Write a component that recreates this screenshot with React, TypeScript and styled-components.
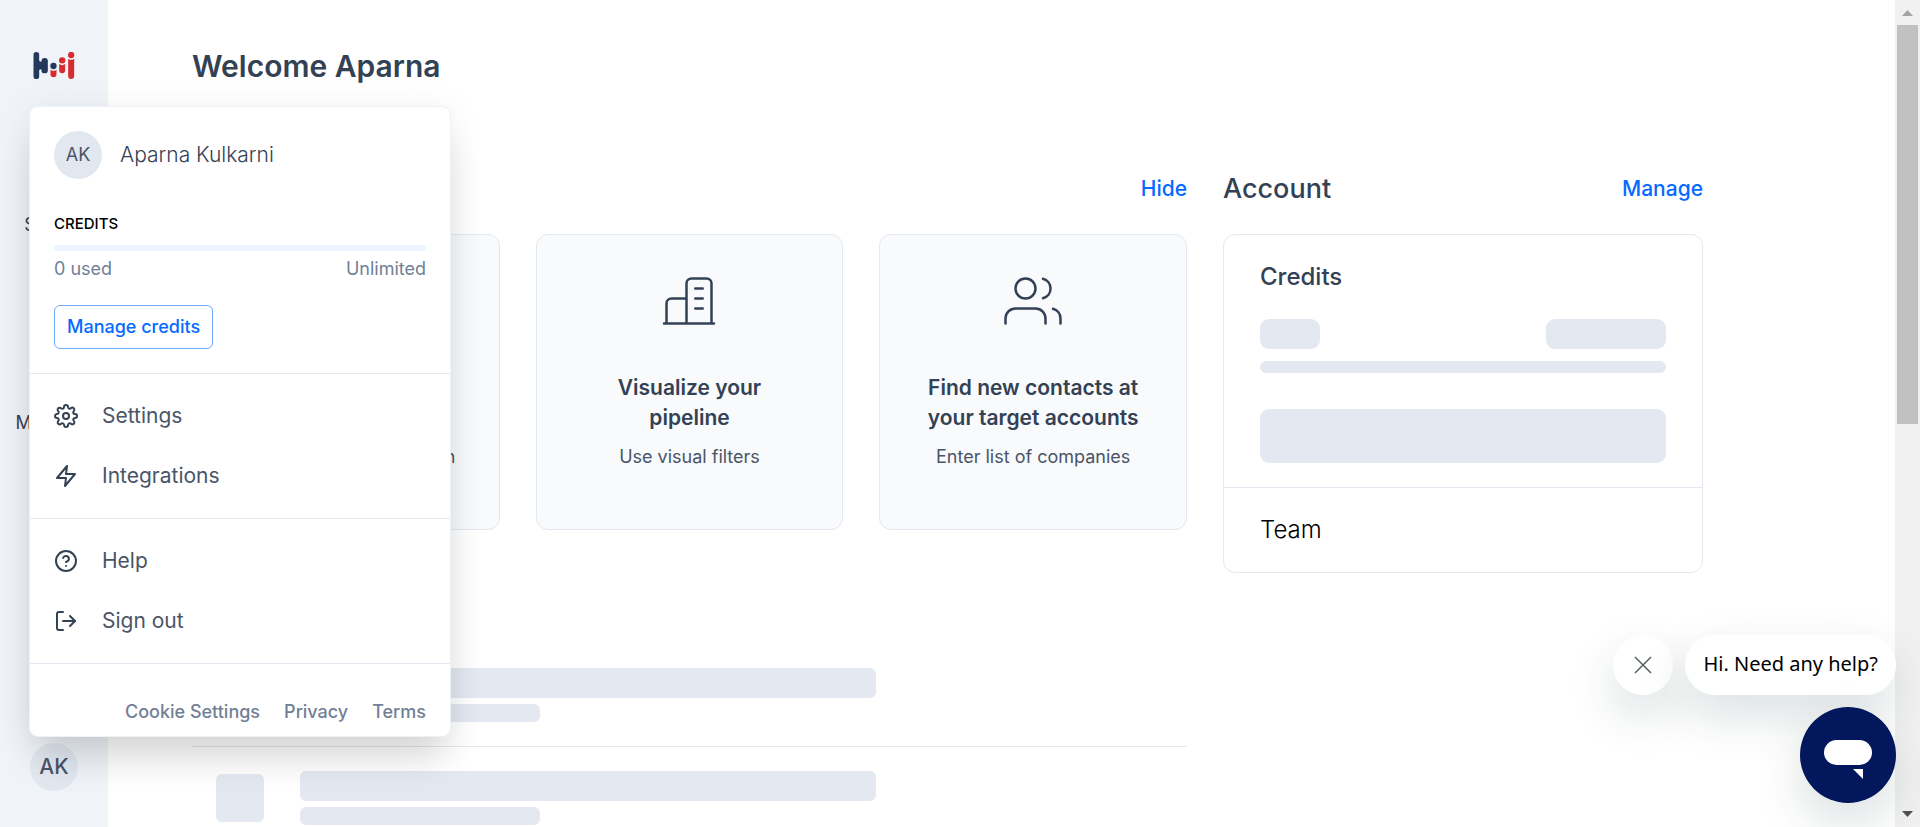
import React from "react";
import styled, { createGlobalStyle } from "styled-components";
import { FiHelpCircle, FiList, FiLogOut, FiSearch, FiSettings, FiUser, FiUsers, FiZap } from "react-icons/fi";

const ink = "#334155";
const muted = "#718096";
const line = "#e2e8f0";
const blue = "#066aff";
const bone = "#e3e8f1";

const GlobalStyle = createGlobalStyle`
  *, *::before, *::after { box-sizing: border-box; }
  body {
    margin: 0;
    background: #fff;
    color: ${ink};
    font-family: Inter, "Liberation Sans", sans-serif;
    font-size: 18px;
    line-height: 27px;
  }
  h1, h2, h3, p, ul { margin: 0; padding: 0; }
  a { color: inherit; text-decoration: none; }
  button { font: inherit; cursor: pointer; }
`;

const Shell = styled.div`
  position: relative;
  display: flex;
  height: 100vh;
  overflow: hidden;
`;

const Sidebar = styled.aside`
  flex: none;
  width: 108px;
  display: flex;
  flex-direction: column;
  align-items: center;
  padding: 52px 0 36px;
  background: #f0f4f9;
`;

const SideNav = styled.nav`
  flex: 1;
  display: flex;
  flex-direction: column;
  padding-top: 66px;
`;

const SideLink = styled.a`
  display: flex;
  flex-direction: column;
  align-items: center;
  gap: 12px;
  height: 99px;
  padding-top: 24px;
`;

const Avatar = styled.span<{ $large?: boolean }>`
  display: flex;
  align-items: center;
  justify-content: center;
  width: 48px;
  height: 48px;
  border-radius: 50%;
  background: #e2e8f0;
  color: #4a5568;
  font-size: ${(p) => (p.$large ? 21 : 18)}px;
  line-height: 26px;
  font-weight: ${(p) => (p.$large ? 500 : 400)};
`;

const AvatarButton = styled.button`
  padding: 0;
  border: 0;
  background: none;
`;

const Main = styled.main`
  flex: 1;
  min-width: 0;
  overflow: hidden;
  padding: 48px 84px 0;
`;

const PageTitle = styled.h1`
  font-size: 30px;
  line-height: 36px;
  font-weight: 600;
  margin-bottom: 86px;
`;

const Columns = styled.div`
  display: grid;
  grid-template-columns: minmax(0, 1fr) 480px;
  gap: 36px;
  max-width: 1511px;
`;

const SectionHead = styled.div`
  display: flex;
  align-items: center;
  justify-content: space-between;
  height: 38px;
  margin-bottom: 26px;
`;

const SectionTitle = styled.h2`
  font-size: 27px;
  line-height: 36px;
  font-weight: 500;
`;

const HideButton = styled.button`
  margin-left: auto;
  padding: 0;
  border: 0;
  background: none;
  color: ${blue};
  font-size: 21px;
  line-height: 36px;
  font-weight: 500;
`;

const ManageLink = styled.a`
  color: ${blue};
  font-size: 21px;
  line-height: 36px;
  font-weight: 500;
`;

const Cards = styled.div`
  display: grid;
  grid-template-columns: repeat(3, minmax(0, 1fr));
  gap: 36px;
`;

const Card = styled.a`
  display: flex;
  flex-direction: column;
  align-items: center;
  min-height: 296px;
  padding: 36px 42px 24px;
  border: 1px solid ${line};
  border-radius: 12px;
  background: #f9fafc;
  text-align: center;
`;

const CardTitle = styled.h3`
  margin: 42px 0 10px;
  font-size: 21px;
  line-height: 30px;
  font-weight: 600;
`;

const CardText = styled.p`
  color: #4a5568;
  white-space: nowrap;
`;

const Activity = styled.ul`
  margin-top: 114px;
  list-style: none;
`;

const ActivityRow = styled.li`
  display: flex;
  align-items: center;
  gap: 36px;
  padding: 24px;
  border-bottom: 1px solid ${line};
`;

const ActivityText = styled.div`
  flex: 1;
  display: flex;
  flex-direction: column;
  gap: 6px;
`;

const Bone = styled.span<{ $w: string; $h: number; $r: number }>`
  display: block;
  flex: none;
  width: ${(p) => p.$w};
  height: ${(p) => p.$h}px;
  border-radius: ${(p) => p.$r}px;
  background: ${bone};
`;

const Panel = styled.div`
  border: 1px solid ${line};
  border-radius: 12px;
`;

const PanelSection = styled.section`
  display: flex;
  flex-direction: column;
  padding: 24px 36px;
  & + & { border-top: 1px solid ${line}; }
`;

const PanelTitle = styled.h3<{ $plain?: boolean }>`
  font-size: 24px;
  line-height: 36px;
  font-weight: ${(p) => (p.$plain ? 300 : 500)};
  color: ${(p) => (p.$plain ? "#000" : ink)};
`;

const BoneRow = styled.div`
  display: flex;
  justify-content: space-between;
  margin: 24px 0 12px;
`;

const BoneBlock = styled.div`
  margin-top: 36px;
`;

const ScrollTrack = styled.div`
  flex: none;
  width: 25px;
  display: flex;
  flex-direction: column;
  align-items: center;
  background: #f1f1f1;
`;

const ScrollArrow = styled.svg`
  flex: none;
  width: 25px;
  height: 25px;
`;

const ScrollThumb = styled.div`
  flex: 399;
  width: 21px;
  background: #c1c1c1;
`;

const ScrollGap = styled.div`
  flex: 378;
`;

const Menu = styled.div`
  position: absolute;
  left: 29px;
  bottom: 90px;
  width: 422px;
  border: 1px solid #edf2f7;
  border-radius: 9px;
  background: #fff;
  box-shadow: 0 30px 38px -8px rgba(0, 0, 0, 0.12), 0 6px 36px rgba(0, 0, 0, 0.08);
`;

const MenuSection = styled.div`
  display: flex;
  flex-direction: column;
  padding: 24px;
`;

const Profile = styled.div`
  display: flex;
  align-items: center;
  gap: 18px;
  font-size: 21px;
  line-height: 26px;
  font-weight: 300;
`;

const CreditsLabel = styled.h2`
  margin: 33px 0 9px;
  color: #000;
  font-size: 15px;
  line-height: 24px;
  font-weight: 500;
`;

const Meter = styled.div`
  height: 6px;
  border-radius: 3px;
  background: #edf4ff;
`;

const Usage = styled.div`
  display: flex;
  justify-content: space-between;
  margin: 4px 0 23px;
  color: ${muted};
`;

const OutlineButton = styled.button`
  align-self: flex-start;
  height: 44px;
  padding: 0 12px;
  border: 1px solid #6ea8fe;
  border-radius: 6px;
  background: #fff;
  color: ${blue};
  line-height: 26px;
  font-weight: 500;
`;

const MenuGroup = styled.nav`
  padding: 12px 0;
  border-top: 1px solid ${line};
`;

const MenuItem = styled.a`
  display: flex;
  align-items: center;
  gap: 24px;
  height: 60px;
  padding: 0 24px;
  color: #4a5568;
  font-size: 21px;
  line-height: 26px;
  svg { color: ${ink}; }
`;

const MenuFooter = styled.footer`
  display: flex;
  justify-content: flex-end;
  gap: 24px;
  padding: 36px 24px 12px;
  border-top: 1px solid ${line};
  color: ${muted};
  line-height: 24px;
  font-weight: 500;
`;

const Chat = styled.div`
  position: absolute;
  right: 24px;
  bottom: 24px;
  display: flex;
  flex-direction: column;
  align-items: flex-end;
  gap: 12px;
`;

const ChatPrompt = styled.div`
  display: flex;
  gap: 12px;
`;

const chatShadow = "0 20px 48px rgba(0, 50, 45, 0.15)";

const ChatClose = styled.button`
  display: flex;
  align-items: center;
  justify-content: center;
  width: 60px;
  height: 60px;
  padding: 0;
  border: 0;
  border-radius: 50%;
  background: #fff;
  box-shadow: ${chatShadow};
`;

const ChatBubble = styled.button`
  height: 60px;
  padding: 0 18px 3px;
  border: 0;
  border-radius: 30px;
  background: #fff;
  box-shadow: ${chatShadow};
  color: #000;
  font-family: "Noto Sans", "Open Sans", sans-serif;
  font-size: 20px;
`;

const ChatButton = styled.button`
  width: 96px;
  height: 96px;
  padding: 0;
  border: 0;
  border-radius: 50%;
  background: #02175c;
  box-shadow: ${chatShadow};
`;

const Logo = () => (
  <svg width="42" height="27" viewBox="40 36 123 81" role="img" aria-label="Home">
    <g fill="#24385b">
      <rect x="40" y="36" width="17" height="81" rx="8.5" />
      <rect x="64" y="54" width="19" height="46" rx="9.5" />
      <path d="M55 60Q60 68 66 64V90Q60 84 55 93Z" />
      <circle cx="100" cy="78" r="9.5" />
    </g>
    <g fill="#d62b2f">
      <path d="M91 89Q100 96 109 89V103A9 9 0 0 1 91 103Z" />
      <circle cx="126" cy="61" r="9.5" />
      <path d="M117 72Q126 79 135 72V91A9 9 0 0 1 117 91Z" />
      <circle cx="153" cy="45" r="9.5" />
      <path d="M144 56Q153 63 162 56V108A9 9 0 0 1 144 108Z" />
    </g>
  </svg>
);

const BuildingIcon = () => (
  <svg width="60" height="60" viewBox="0 0 24 24" fill="none" stroke="currentColor" strokeWidth="1" strokeLinecap="round" strokeLinejoin="round" aria-hidden="true">
    <path d="M2 21H22M3 21V13A2 2 0 0 1 5 11H11M11 21V5A2 2 0 0 1 13 3H19A2 2 0 0 1 21 5V21" />
    <path d="M14.5 7H17.5M14.5 11H17.5M14.5 15H17.5" />
  </svg>
);

const cards = [
  { title: "Find people to contact", text: "Find by team and location", icon: <FiUser size={60} strokeWidth={1} /> },
  { title: "Visualize your pipeline", text: "Use visual filters", icon: <BuildingIcon /> },
  { title: "Find new contacts at your target accounts", text: "Enter list of companies", icon: <FiUsers size={60} strokeWidth={1} /> },
];

export default function App() {
  return (
    <>
      <GlobalStyle />
      <Shell>
        <Sidebar>
          <Logo />
          <SideNav aria-label="Primary">
            <SideLink href="#search"><FiSearch size={30} />Search</SideLink>
            <SideLink href="#lists" aria-label="Lists"><FiList size={30} /></SideLink>
            <SideLink href="#leads"><FiUsers size={30} />My leads</SideLink>
          </SideNav>
          <AvatarButton aria-label="Account menu" aria-expanded="true">
            <Avatar $large>AK</Avatar>
          </AvatarButton>
        </Sidebar>

        <Main>
          <PageTitle>Welcome Aparna</PageTitle>
          <Columns>
            <div>
              <SectionHead>
                <HideButton>Hide</HideButton>
              </SectionHead>
              <Cards>
                {cards.map((c) => (
                  <Card href="#start" key={c.title}>
                    {c.icon}
                    <CardTitle>{c.title}</CardTitle>
                    <CardText>{c.text}</CardText>
                  </Card>
                ))}
              </Cards>
              <Activity aria-label="Loading activity">
                {[0, 1].map((i) => (
                  <ActivityRow key={i}>
                    <Bone $w="48px" $h={48} $r={6} />
                    <ActivityText>
                      <Bone $w="576px" $h={30} $r={6} />
                      <Bone $w="240px" $h={18} $r={6} />
                    </ActivityText>
                  </ActivityRow>
                ))}
              </Activity>
            </div>

            <div>
              <SectionHead>
                <SectionTitle>Account</SectionTitle>
                <ManageLink href="#account">Manage</ManageLink>
              </SectionHead>
              <Panel>
                <PanelSection>
                  <PanelTitle>Credits</PanelTitle>
                  <BoneRow>
                    <Bone $w="60px" $h={30} $r={9} />
                    <Bone $w="120px" $h={30} $r={9} />
                  </BoneRow>
                  <Bone $w="100%" $h={12} $r={6} />
                  <BoneBlock>
                    <Bone $w="100%" $h={54} $r={9} />
                  </BoneBlock>
                </PanelSection>
                <PanelSection>
                  <PanelTitle $plain>Team</PanelTitle>
                </PanelSection>
              </Panel>
            </div>
          </Columns>
        </Main>

        <ScrollTrack aria-hidden="true">
          <ScrollArrow viewBox="0 0 25 25"><path d="M7 16L12.5 10L18 16Z" fill="#a3a3a3" /></ScrollArrow>
          <ScrollThumb />
          <ScrollGap />
          <ScrollArrow viewBox="0 0 25 25"><path d="M7 9L12.5 15L18 9Z" fill="#505050" /></ScrollArrow>
        </ScrollTrack>

        <Menu>
          <MenuSection>
            <Profile>
              <Avatar>AK</Avatar>
              Aparna Kulkarni
            </Profile>
            <CreditsLabel>CREDITS</CreditsLabel>
            <Meter role="progressbar" aria-label="Credits used" aria-valuenow={0} />
            <Usage>
              <span>0 used</span>
              <span>Unlimited</span>
            </Usage>
            <OutlineButton>Manage credits</OutlineButton>
          </MenuSection>
          <MenuGroup aria-label="Preferences">
            <MenuItem href="#settings"><FiSettings size={24} />Settings</MenuItem>
            <MenuItem href="#integrations"><FiZap size={24} />Integrations</MenuItem>
          </MenuGroup>
          <MenuGroup aria-label="Support">
            <MenuItem href="#help"><FiHelpCircle size={24} />Help</MenuItem>
            <MenuItem href="#signout"><FiLogOut size={24} />Sign out</MenuItem>
          </MenuGroup>
          <MenuFooter>
            <a href="#cookies">Cookie Settings</a>
            <a href="#privacy">Privacy</a>
            <a href="#terms">Terms</a>
          </MenuFooter>
        </Menu>

        <Chat>
          <ChatPrompt>
            <ChatClose aria-label="Close message">
              <svg width="18" height="18" viewBox="0 0 18 18" fill="none" stroke="#555f61" strokeWidth="1.5">
                <path d="M1 1L17 17M17 1L1 17" />
              </svg>
            </ChatClose>
            <ChatBubble>Hi. Need any help?</ChatBubble>
          </ChatPrompt>
          <ChatButton aria-label="Open chat">
            <svg width="96" height="96" viewBox="0 0 96 96" fill="#fff">
              <rect x="24" y="33" width="48" height="25" rx="12.5" />
              <path d="M53 62H63V72Z" />
            </svg>
          </ChatButton>
        </Chat>
      </Shell>
    </>
  );
}
